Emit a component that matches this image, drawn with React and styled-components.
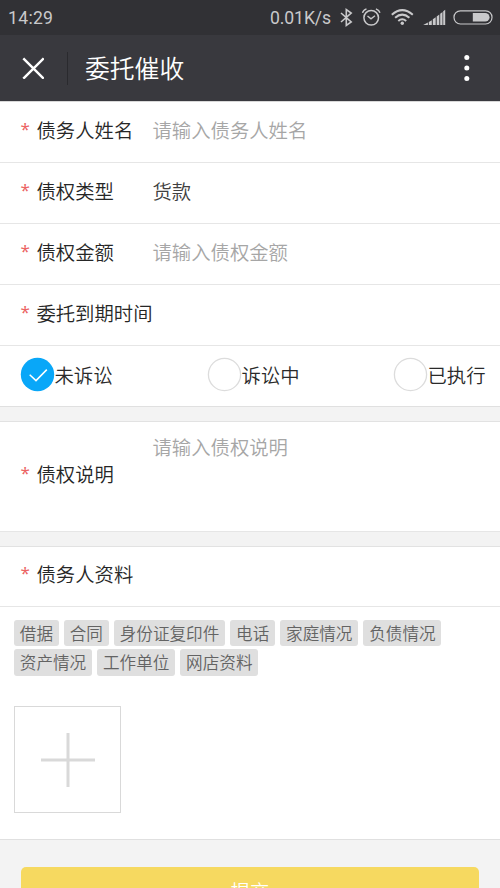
import React from "react";
import styled, { createGlobalStyle } from "styled-components";

const GlobalStyle = createGlobalStyle`
  html, body { margin: 0; padding: 0; height: 100%; overflow: hidden; background: #f3f3f3; }
  * { box-sizing: border-box; }
  body { font-family: "Noto Sans CJK SC", sans-serif; font-weight: 350; color: #2a2a2a; }
`;

const Screen = styled.div`
  width: 500px;
  height: 888px;
  overflow: hidden;
  display: flex;
  flex-direction: column;
  background: #f3f3f3;
`;

const StatusBar = styled.div`
  flex: none;
  height: 35px;
  display: flex;
  justify-content: space-between;
  padding: 0 7px 0 8px;
  background: #313135;
  color: #c9c9cb;
  font-family: Roboto, sans-serif;
  font-weight: 400;
  font-size: 17.6px;
  line-height: 37px;
`;

const StatusGroup = styled.div`
  display: flex;
  align-items: flex-start;
`;

const StatusTime = styled.span`
  letter-spacing: 0.3px;
`;

const StatusSpeed = styled.span`
  width: 62px;
  white-space: nowrap;
  letter-spacing: -0.1px;
`;

const StatusIcons = styled.svg`
  display: block;
  width: 161px;
  height: 35px;
`;

const NavBar = styled.header`
  flex: none;
  height: 66px;
  display: flex;
  align-items: center;
  background: #39393e;
  color: #fff;
`;

const CloseIcon = styled.svg`
  width: 22px;
  height: 22px;
  margin-left: 22px;
`;

const NavDivider = styled.span`
  width: 1px;
  height: 33px;
  margin: 0 17px 0 23px;
  background: #2a2a2e;
`;

const NavTitle = styled.h1`
  flex: 1;
  margin: 0;
  font-weight: 350;
  font-size: 24.8px;
  line-height: 64px;
  padding-bottom: 2px;
`;

const MoreIcon = styled.svg`
  width: 6px;
  height: 28px;
  margin-right: 30px;
`;

const Section = styled.section`
  flex: none;
  background: #fff;
  border-top: 1px solid ${(p) => (p.$first ? "#d8d8d8" : "#e2e2e2")};
  margin-bottom: 14px;
`;

const Row = styled.div`
  display: flex;
  align-items: ${(p) => (p.$tall ? "stretch" : "center")};
  height: ${(p) => p.$height || 61}px;
  border-bottom: 1px solid #e6e6e6;
  padding: 0 0 ${(p) => (p.$height ? 5 : 4)}px 21px;
  font-size: 19.35px;
  line-height: 28px;
`;

const Label = styled.label`
  display: flex;
  align-items: center;
  width: 132px;
  margin-left: -0.5px;
  white-space: nowrap;
  color: #262626;
`;

const Required = styled.span`
  width: 16px;
  padding-bottom: 2px;
  font-family: "Noto Sans", sans-serif;
  font-weight: 400;
  font-size: 17px;
  color: #ec6464;
`;

const Value = styled.div`
  color: ${(p) => (p.$placeholder ? "#a6a6a6" : "#404040")};
  padding-top: ${(p) => (p.$top ? 11 : 0)}px;
`;

const RadioRow = styled.div`
  display: grid;
  grid-template-columns: 187px 186px 1fr;
  align-items: center;
  height: 61px;
  padding: 0 0 3px 20px;
  border-bottom: 1px solid #e0e0e0;
  font-size: 19.35px;
`;

const Radio = styled.div`
  display: flex;
  align-items: center;
  white-space: nowrap;
`;

const RadioMark = styled.svg`
  width: 35px;
  height: 35px;
`;

const RadioText = styled.span`
  line-height: 28px;
  margin-left: -0.5px;
`;

const Materials = styled.div`
  height: 233px;
  padding: 13px 14px 0;
  border-bottom: 1px solid #e0e0e0;
`;

const TagLine = styled.div`
  display: flex;
  gap: 5.2px;
  margin-bottom: 3px;
`;

const Tag = styled.span`
  height: 26.4px;
  padding: 0 5.8px;
  border-radius: 3px;
  background: #dfdfdf;
  color: #636363;
  font-size: 16.6px;
  line-height: 26.4px;
  white-space: nowrap;
`;

const Upload = styled.button`
  display: flex;
  align-items: center;
  justify-content: center;
  width: 107px;
  height: 107px;
  margin-top: 30px;
  padding: 1px 0 0;
  border: 1.5px solid #d9d9d9;
  background: #fff;
`;

const Submit = styled.button`
  flex: none;
  height: 50px;
  margin: 13px 21px 0;
  padding: 0 0 3px;
  border: 0;
  border-radius: 5px;
  background: #f6d960;
  color: #fff;
  font-family: inherit;
  font-weight: 350;
  font-size: 19.35px;
  line-height: 46px;
`;

function Field({ label, value, placeholder, height, tall }) {
  return (
    <Row $height={height} $tall={tall}>
      <Label>
        <Required>*</Required>
        {label}
      </Label>
      {value && (
        <Value $placeholder={placeholder} $top={tall}>
          {value}
        </Value>
      )}
    </Row>
  );
}

function Option({ label, checked }) {
  return (
    <Radio>
      <RadioMark viewBox="0 0 35 35" fill="none">
        {checked ? (
          <>
            <circle cx="17.5" cy="17.5" r="16.7" fill="#09a7f8" />
            <path d="M9.7 17.7L16 23.6L26.8 12.6" stroke="#fff" strokeWidth="1.5" />
          </>
        ) : (
          <circle cx="17.5" cy="17.5" r="16.1" stroke="#dcdcdc" strokeWidth="1.3" />
        )}
      </RadioMark>
      <RadioText>{label}</RadioText>
    </Radio>
  );
}

const tagLines = [
  ["借据", "合同", "身份证复印件", "电话", "家庭情况", "负债情况"],
  ["资产情况", "工作单位", "网店资料"],
];

export default function App() {
  return (
    <>
      <GlobalStyle />
      <Screen>
        <StatusBar>
          <StatusTime>14:29</StatusTime>
          <StatusGroup>
            <StatusSpeed>0.01K/s</StatusSpeed>
            <StatusIcons viewBox="332 0 161 35" fill="none" stroke="#c9c9cb" strokeWidth="1.6">
              <path d="M341 13L351.2 22L346.3 25.4V9.6L351.2 13L341 22" />
              <circle cx="371.2" cy="17.8" r="7.3" strokeWidth="1.5" />
              <path d="M367.5 16L371 18.8L375 15.8M362.5 12.8Q363.2 10 366.5 8.8M380 12.8Q379.2 10 375.9 8.8" strokeWidth="1.4" />
              <g strokeWidth="2">
                <path d="M391.8 14.7Q402.2 5.5 412.8 14.7" />
                <path d="M395.1 17.8Q402.2 11.5 409.4 17.8" />
                <path d="M398.3 21Q402.2 17.5 406.2 21" />
              </g>
              <circle cx="402.3" cy="23.3" r="1.7" fill="#c9c9cb" stroke="none" />
              <path
                d="M423.2 25L427.9 22.4V25ZM428.8 22L431.8 20.2V25H428.8ZM432.8 19.2L435.7 17.2V25H432.8ZM436.7 16.5L439.3 14.6V25H436.7ZM440.2 13.8L442.5 12V25H440.2ZM443.2 11.3L445.2 9.8V25H443.2Z"
                fill="#c9c9cb"
                stroke="none"
              />
              <rect x="454" y="10.8" width="38" height="13.2" rx="6.4" strokeWidth="1.2" />
              <path d="M472.8 12.9H485.2A4.3 4.3 0 0 1 485.2 21.6H472.8Z" fill="#c9c9cb" stroke="none" />
            </StatusIcons>
          </StatusGroup>
        </StatusBar>
        <NavBar>
          <CloseIcon viewBox="0 0 22 22" fill="none" stroke="#fff" strokeWidth="2.4">
            <path d="M1.3 1.3L21.7 21.7M21.7 1.3L1.3 21.7" />
          </CloseIcon>
          <NavDivider />
          <NavTitle>委托催收</NavTitle>
          <MoreIcon viewBox="0 0 6 28" fill="#fff">
            <circle cx="2.8" cy="3.4" r="2.5" />
            <circle cx="2.8" cy="14" r="2.5" />
            <circle cx="2.8" cy="24.6" r="2.5" />
          </MoreIcon>
        </NavBar>
        <Section $first>
          <Field label="债务人姓名" value="请输入债务人姓名" placeholder />
          <Field label="债权类型" value="货款" />
          <Field label="债权金额" value="请输入债权金额" placeholder />
          <Field label="委托到期时间" />
          <RadioRow>
            <Option label="未诉讼" checked />
            <Option label="诉讼中" />
            <Option label="已执行" />
          </RadioRow>
        </Section>
        <Section>
          <Field label="债权说明" value="请输入债权说明" placeholder height={110} tall />
        </Section>
        <Section>
          <Field label="债务人资料" height={60} />
          <Materials>
            {tagLines.map((line) => (
              <TagLine key={line[0]}>
                {line.map((name) => (
                  <Tag key={name}>{name}</Tag>
                ))}
              </TagLine>
            ))}
            <Upload aria-label="添加图片">
              <svg width="54" height="54" stroke="#d9d9d9" strokeWidth="3">
                <path d="M27 0V54M0 27H54" />
              </svg>
            </Upload>
          </Materials>
        </Section>
        <Submit>提交</Submit>
      </Screen>
    </>
  );
}
